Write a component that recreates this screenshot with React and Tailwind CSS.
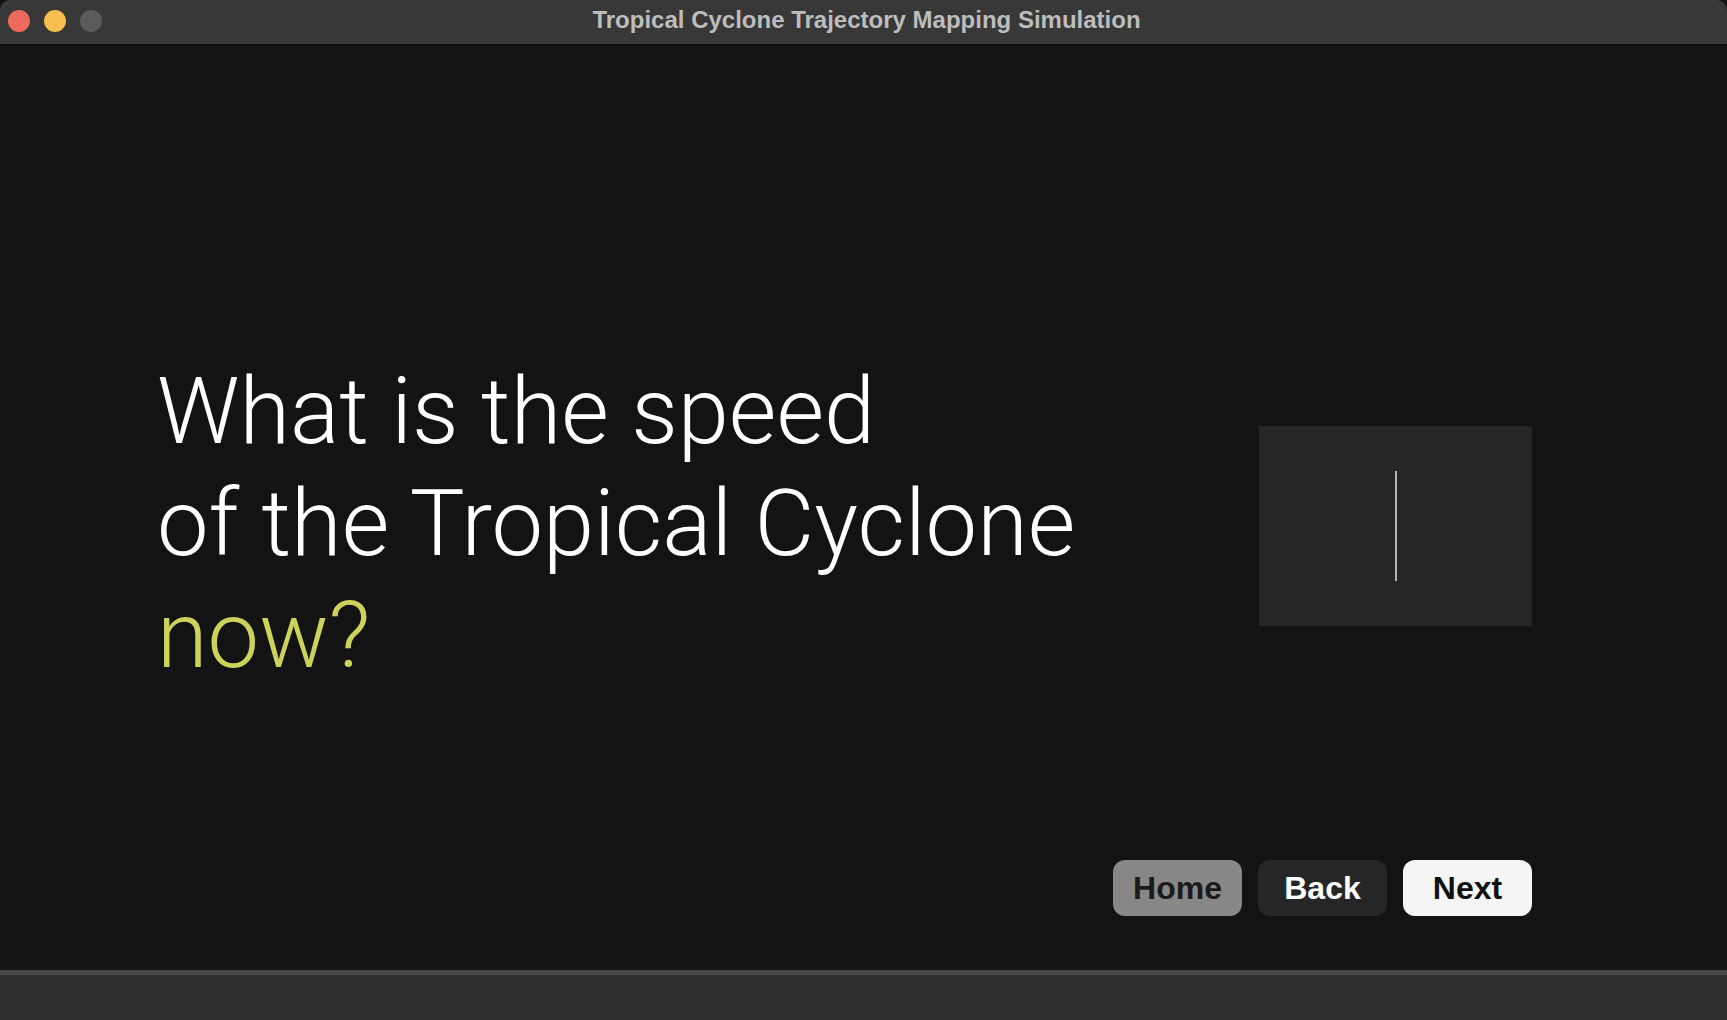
const TitleBar = () => {
  return (
    <div className="relative flex items-center h-[46px] bg-[#383838] border-b-2 border-[#0c0c0c] rounded-t-[10px]">
      <div className="flex items-center gap-[14px] pl-[8px] -mt-[2px]">
        <span className="w-[22px] h-[22px] rounded-full bg-[#ee6a5f]" />
        <span className="w-[22px] h-[22px] rounded-full bg-[#f5bf4f]" />
        <span className="w-[22px] h-[22px] rounded-full bg-[#5b5b5b]" />
      </div>
      <div className="absolute inset-0 flex items-center justify-center pl-[6px] pb-[4px] pointer-events-none">
        <span className="font-['Liberation_Sans',sans-serif] font-bold text-[24px] leading-none text-[#bdbdbd]">
          Tropical Cyclone Trajectory Mapping Simulation
        </span>
      </div>
    </div>
  );
};

const NavButton = ({ label, className }) => {
  return (
    <button
      className={
        "w-[129px] h-[56px] rounded-[12px] font-['Liberation_Sans',sans-serif] font-bold text-[32px] leading-none " +
        className
      }
    >
      {label}
    </button>
  );
};

export default function App() {
  return (
    <div className="flex flex-col h-screen w-full bg-[#131313] overflow-hidden">
      <TitleBar />
      <main className="flex-1 flex flex-col pt-[312px]">
        <div className="flex items-center justify-between h-[336px] pl-[157px] pr-[195px]">
          <h1 className="-mt-[4px] font-['Roboto','Liberation_Sans',sans-serif] font-light text-[92px] leading-[112px] text-white">
            What is the speed
            <br />
            of the Tropical Cyclone
            <br />
            <span className="text-[#cdd35a]">now?</span>
          </h1>
          <div className="flex items-center justify-center w-[273px] h-[200px] bg-[#262626]">
            <span className="w-[2px] h-[110px] bg-[#b4b4b4]" />
          </div>
        </div>
        <div className="flex justify-end gap-[16px] mt-[166px] pr-[195px]">
          <NavButton label="Home" className="bg-[#878787] text-[#1a1a1a]" />
          <NavButton label="Back" className="bg-[#262626] text-white" />
          <NavButton label="Next" className="bg-[#f5f5f5] text-[#111111]" />
        </div>
      </main>
      <div className="h-[50px] bg-[#303030] border-t-[5px] border-[#474747]" />
    </div>
  );
}
